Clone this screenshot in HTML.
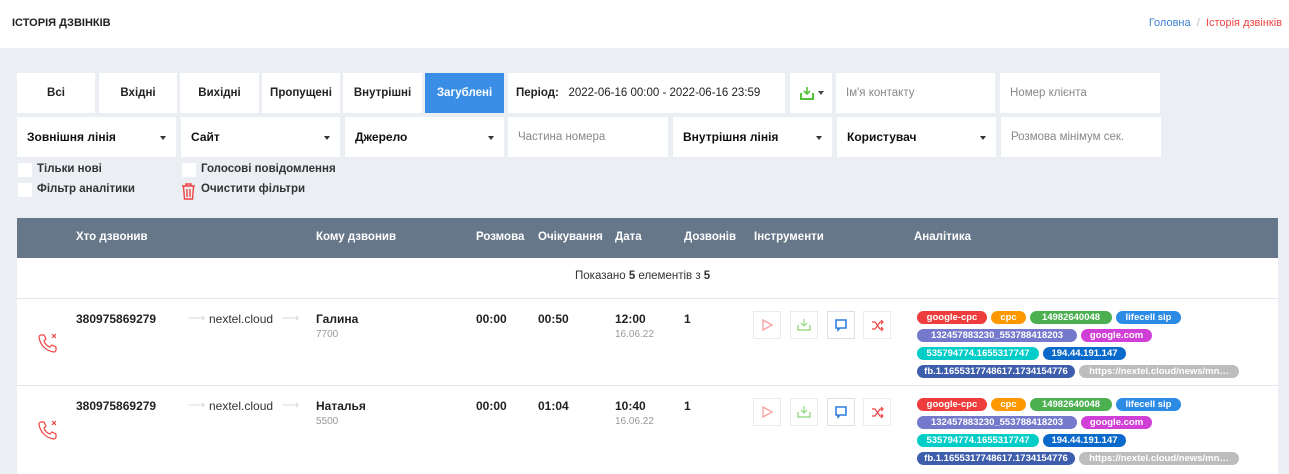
<!DOCTYPE html>
<html><head><meta charset="utf-8"><style>
*{box-sizing:border-box;margin:0;padding:0}
body{width:1289px;height:474px;overflow:hidden;background:#ebeef3;font-family:"Liberation Sans",sans-serif;position:relative;color:#222}
.a{position:absolute}
.hdr{left:0;top:0;width:1289px;height:48px;background:#fff}
.box{position:absolute;background:#fff;font-size:12px;display:flex;align-items:center}
.btn{justify-content:center;font-weight:bold;color:#222;font-size:11.5px}
.sel{font-weight:bold;padding-left:10px;color:#111}
.sel:after{content:"";position:absolute;right:10px;top:19px;border:3px solid transparent;border-top:4px solid #333;border-bottom:0}
.ph{color:#888;padding-left:10px;font-size:11.5px}
.cb{position:absolute;width:14px;height:14px;background:#fff}
.lbl{position:absolute;font-size:11.5px;font-weight:bold;color:#333}
.th{position:absolute;top:231px;font-size:11.5px;font-weight:bold;color:#fff}
.row{position:absolute;left:17px;width:1261px;background:#fff;border-top:1px solid #e4e6ea}
.b{position:absolute;font-size:12px;font-weight:bold;color:#222}
.s{position:absolute;font-size:10px;color:#999}
.tool{position:absolute;width:28px;height:28px;border:1px solid #e8eaf0;background:#fff}
.tag{position:absolute;height:13px;border-radius:7px;color:#fff;font-size:9.5px;font-weight:bold;line-height:13px;padding:0;text-align:center;overflow:hidden;white-space:nowrap}
.ar{position:absolute;color:#d8d8d8;font-size:12px}
</style></head><body>
<div class="a hdr"></div>
<div class="a" style="left:12px;top:17px;font-size:11px;font-weight:bold;color:#222">ІСТОРІЯ ДЗВІНКІВ</div>
<div class="a" style="right:7px;top:17px;font-size:11px"><span style="color:#3a7fd0">Головна</span> <span style="color:#bbb">&nbsp;/&nbsp;</span> <span style="color:#f04444">Історія дзвінків</span></div>

<div class="box btn" style="left:17px;top:73px;width:78px;height:40px">Всі</div>
<div class="box btn" style="left:99px;top:73px;width:78px;height:40px">Вхідні</div>
<div class="box btn" style="left:180px;top:73px;width:79px;height:40px">Вихідні</div>
<div class="box btn" style="left:262px;top:73px;width:78px;height:40px">Пропущені</div>
<div class="box btn" style="left:343px;top:73px;width:79px;height:40px">Внутрішні</div>
<div class="box btn" style="left:425px;top:73px;width:79px;height:40px;background:#3a8ee6;color:#fff">Загублені</div>
<div class="box" style="left:508px;top:73px;width:277px;height:40px;padding-left:8px;font-size:11.5px"><b>Період:</b>&nbsp;&nbsp;&nbsp;2022-06-16 00:00 - 2022-06-16 23:59</div>
<div class="box" style="left:790px;top:73px;width:42px;height:40px;padding-left:10px"><svg width="14" height="14" viewBox="0 0 14 14"><path d="M1 7v6h12V7" fill="none" stroke="#56c13a" stroke-width="2"/><path d="M7 1v7M4 5l3 3 3-3" fill="none" stroke="#56c13a" stroke-width="1.6"/></svg><span style="margin-left:4px;border:3px solid transparent;border-top:4px solid #444;border-bottom:0"></span></div>
<div class="box ph" style="left:836px;top:73px;width:159px;height:40px">Ім'я контакту</div>
<div class="box ph" style="left:1000px;top:73px;width:160px;height:40px">Номер клієнта</div>

<div class="box sel" style="left:17px;top:117px;width:159px;height:40px">Зовнішня лінія</div>
<div class="box sel" style="left:181px;top:117px;width:159px;height:40px">Сайт</div>
<div class="box sel" style="left:345px;top:117px;width:159px;height:40px">Джерело</div>
<div class="box ph" style="left:508px;top:117px;width:160px;height:40px">Частина номера</div>
<div class="box sel" style="left:673px;top:117px;width:159px;height:40px">Внутрішня лінія</div>
<div class="box sel" style="left:837px;top:117px;width:159px;height:40px">Користувач</div>
<div class="box ph" style="left:1001px;top:117px;width:160px;height:40px">Розмова мінімум сек.</div>

<div class="cb" style="left:18px;top:163px"></div><div class="lbl" style="left:37px;top:163px">Тільки нові</div>
<div class="cb" style="left:18px;top:183px"></div><div class="lbl" style="left:37px;top:183px">Фільтр аналітики</div>
<div class="cb" style="left:182px;top:163px"></div><div class="lbl" style="left:201px;top:163px">Голосові повідомлення</div>
<svg class="a" style="left:181px;top:183px" width="15" height="17" viewBox="0 0 15 17"><path d="M1 3h13M5 3V1h5v2M2.5 3.5l1 12.5h8l1-12.5M6 6v8M9 6v8" fill="none" stroke="#f04444" stroke-width="1.4"/></svg>
<div class="lbl" style="left:201px;top:183px">Очистити фільтри</div>

<div class="a" style="left:17px;top:218px;width:1261px;height:40px;background:#67778a"></div>
<div class="th" style="left:76px">Хто дзвонив</div>
<div class="th" style="left:316px">Кому дзвонив</div>
<div class="th" style="left:476px">Розмова</div>
<div class="th" style="left:538px">Очікування</div>
<div class="th" style="left:615px">Дата</div>
<div class="th" style="left:684px">Дозвонів</div>
<div class="th" style="left:754px">Інструменти</div>
<div class="th" style="left:914px">Аналітика</div>
<div class="a" style="left:17px;top:258px;width:1261px;height:40px;background:#fff"></div>
<div class="a" style="left:575px;top:270px;font-size:11.5px;color:#333">Показано <b>5</b> елементів з <b>5</b></div>

<div class="row" style="top:298px;height:87px"></div>
<div class="row" style="top:385px;height:89px"></div>

<!-- Row 1 -->
<svg class="a" style="left:37px;top:332px" width="22" height="22" viewBox="0 0 22 22"><path d="M4 3l3 0 2 4-2 2c1 3 3 5 6 6l2-2 4 2v3c0 1-1 2-2 2C9 19 3 13 2 5c0-1 1-2 2-2z" fill="none" stroke="#f04444" stroke-width="1.2"/><path d="M15 2l4 4M19 2l-4 4" stroke="#f04444" stroke-width="1.2"/></svg>
<div class="b" style="left:76px;top:312px">380975869279</div>
<div class="ar" style="left:188px;top:311px">⟶</div>
<div class="a" style="left:209px;top:312px;font-size:12px;color:#333">nextel.cloud</div>
<div class="ar" style="left:282px;top:311px">⟶</div>
<div class="b" style="left:316px;top:312px">Галина</div><div class="s" style="left:316px;top:329px">7700</div>
<div class="b" style="left:476px;top:312px">00:00</div>
<div class="b" style="left:538px;top:312px">00:50</div>
<div class="b" style="left:615px;top:312px">12:00</div><div class="s" style="left:615px;top:329px">16.06.22</div>
<div class="b" style="left:684px;top:312px">1</div>

<!-- Row 2 -->
<svg class="a" style="left:37px;top:419px" width="22" height="22" viewBox="0 0 22 22"><path d="M4 3l3 0 2 4-2 2c1 3 3 5 6 6l2-2 4 2v3c0 1-1 2-2 2C9 19 3 13 2 5c0-1 1-2 2-2z" fill="none" stroke="#f04444" stroke-width="1.2"/><path d="M15 2l4 4M19 2l-4 4" stroke="#f04444" stroke-width="1.2"/></svg>
<div class="b" style="left:76px;top:399px">380975869279</div>
<div class="ar" style="left:188px;top:398px">⟶</div>
<div class="a" style="left:209px;top:399px;font-size:12px;color:#333">nextel.cloud</div>
<div class="ar" style="left:282px;top:398px">⟶</div>
<div class="b" style="left:316px;top:399px">Наталья</div><div class="s" style="left:316px;top:416px">5500</div>
<div class="b" style="left:476px;top:399px">00:00</div>
<div class="b" style="left:538px;top:399px">01:04</div>
<div class="b" style="left:615px;top:399px">10:40</div><div class="s" style="left:615px;top:416px">16.06.22</div>
<div class="b" style="left:684px;top:399px">1</div>

<!-- tools row1 -->
<div class="tool" style="left:753px;top:311px"><svg width="26" height="26"><path d="M9 8l9 5-9 5z" fill="none" stroke="#f7a0a0" stroke-width="1.3"/></svg></div>
<div class="tool" style="left:790px;top:311px"><svg width="26" height="26"><path d="M7 13v5h12v-5" fill="none" stroke="#9ddc8a" stroke-width="1.5"/><path d="M13 7v7M10 11l3 3 3-3" fill="none" stroke="#9ddc8a" stroke-width="1.3"/></svg></div>
<div class="tool" style="left:827px;top:311px;border-color:#dde0ea"><svg width="26" height="26"><path d="M8 8h10v8h-6l-2 2v-2H8z" fill="none" stroke="#2f7fe0" stroke-width="1.6"/></svg></div>
<div class="tool" style="left:863px;top:311px"><svg width="26" height="26"><path d="M8 10h3l5 7h3M8 17h3l5-7h3M17 8l2 2-2 2M17 15l2 2-2 2" fill="none" stroke="#f04444" stroke-width="1.2"/></svg></div>
<!-- tools row2 -->
<div class="tool" style="left:753px;top:398px"><svg width="26" height="26"><path d="M9 8l9 5-9 5z" fill="none" stroke="#f7a0a0" stroke-width="1.3"/></svg></div>
<div class="tool" style="left:790px;top:398px"><svg width="26" height="26"><path d="M7 13v5h12v-5" fill="none" stroke="#9ddc8a" stroke-width="1.5"/><path d="M13 7v7M10 11l3 3 3-3" fill="none" stroke="#9ddc8a" stroke-width="1.3"/></svg></div>
<div class="tool" style="left:827px;top:398px;border-color:#dde0ea"><svg width="26" height="26"><path d="M8 8h10v8h-6l-2 2v-2H8z" fill="none" stroke="#2f7fe0" stroke-width="1.6"/></svg></div>
<div class="tool" style="left:863px;top:398px"><svg width="26" height="26"><path d="M8 10h3l5 7h3M8 17h3l5-7h3M17 8l2 2-2 2M17 15l2 2-2 2" fill="none" stroke="#f04444" stroke-width="1.2"/></svg></div>

<!-- tags row1 -->
<div class="tag" style="left:917px;top:311px;width:70px;background:#ef3d3d">google-cpc</div>
<div class="tag" style="left:991px;top:311px;width:35px;background:#fd9800">cpc</div>
<div class="tag" style="left:1030px;top:311px;width:82px;background:#4caf50">14982640048</div>
<div class="tag" style="left:1116px;top:311px;width:65px;background:#2b8be5">lifecell sip</div>
<div class="tag" style="left:917px;top:329px;width:160px;background:#7479cc">132457883230_553788418203</div>
<div class="tag" style="left:1081px;top:329px;width:71px;background:#d03fd6">google.com</div>
<div class="tag" style="left:917px;top:347px;width:122px;background:#00cdc7">535794774.1655317747</div>
<div class="tag" style="left:1043px;top:347px;width:83px;background:#0a6acb">194.44.191.147</div>
<div class="tag" style="left:917px;top:365px;width:158px;background:#3e5ead">fb.1.1655317748617.1734154776</div>
<div class="tag" style="left:1079px;top:365px;width:160px;background:#bdbdbd">https://nextel.cloud/news/mn…</div>
<!-- tags row2 -->
<div class="tag" style="left:917px;top:398px;width:70px;background:#ef3d3d">google-cpc</div>
<div class="tag" style="left:991px;top:398px;width:35px;background:#fd9800">cpc</div>
<div class="tag" style="left:1030px;top:398px;width:82px;background:#4caf50">14982640048</div>
<div class="tag" style="left:1116px;top:398px;width:65px;background:#2b8be5">lifecell sip</div>
<div class="tag" style="left:917px;top:416px;width:160px;background:#7479cc">132457883230_553788418203</div>
<div class="tag" style="left:1081px;top:416px;width:71px;background:#d03fd6">google.com</div>
<div class="tag" style="left:917px;top:434px;width:122px;background:#00cdc7">535794774.1655317747</div>
<div class="tag" style="left:1043px;top:434px;width:83px;background:#0a6acb">194.44.191.147</div>
<div class="tag" style="left:917px;top:452px;width:158px;background:#3e5ead">fb.1.1655317748617.1734154776</div>
<div class="tag" style="left:1079px;top:452px;width:160px;background:#bdbdbd">https://nextel.cloud/news/mn…</div>
</body></html>
